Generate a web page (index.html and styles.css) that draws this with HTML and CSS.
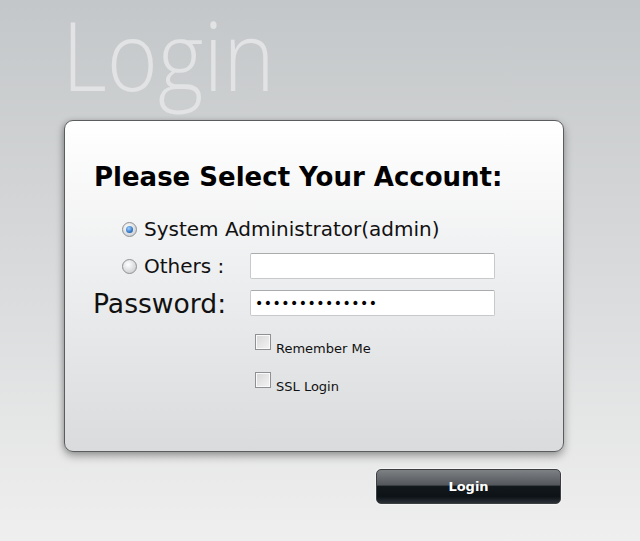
FILE: index.html
```html
<!DOCTYPE html>
<html>
<head>
<meta charset="UTF-8">
<title>Login</title>
<link rel="stylesheet" href="styles.css">
</head>
<body>
<div class="page">
	<h1 class="title">Login</h1>
	<form class="panel">
		<h2 class="heading">Please Select Your Account:</h2>
		<div class="row account">
			<span class="radio checked"></span>
			<span class="choice">System Administrator(admin)</span>
		</div>
		<div class="row">
			<div class="label others">
				<span class="radio"></span>
				<span class="choice">Others :</span>
			</div>
			<input type="text" class="field">
		</div>
		<div class="row pass-row">
			<div class="label pass">Password:</div>
			<input type="password" class="field secret" value="12345678901234">
		</div>
		<div class="row opt">
			<span class="check"></span>
			<span class="opt-text">Remember Me</span>
		</div>
		<div class="row opt">
			<span class="check"></span>
			<span class="opt-text">SSL Login</span>
		</div>
	</form>
	<div class="actions">
		<button type="button" class="btn">Login</button>
	</div>
</div>
</body>
</html>
```
FILE: styles.css
```css
html, body {
	margin : 0;
	height : 100%;
}
body {
	background : linear-gradient(#c4c7c9, #d6d8d9 45%, #efefef);
	font-family : "DejaVu Sans", Verdana, sans-serif;
}
.page {
	padding-left : 64px;
	padding-top : 1px;
	width : 500px;
}
.title {
	margin : -13px 0 0 -2px;
	height : 132px;
	font-family : "Open Sans", sans-serif;
	font-weight : 300;
	font-size : 96px;
	line-height : normal;
	color : #e1e3e4;
	transform : scaleX(0.91);
	transform-origin : left top;
}
.panel {
	box-sizing : border-box;
	width : 500px;
	height : 332px;
	margin : 0;
	padding : 41px 0 0 29px;
	border : 1px solid #5a5c5e;
	border-radius : 9px;
	background : linear-gradient(#ffffff, #eeeff0 45%, #d9dbdc);
	box-shadow : 0 4px 8px rgba(0, 0, 0, 0.35), -2px 0 4px rgba(0, 0, 0, 0.1);
}
.heading {
	margin : 0 0 22px 0;
	font-size : 26px;
	font-weight : bold;
	color : #000;
}
.row {
	display : flex;
	align-items : center;
}
.account {
	padding-left : 28px;
	height : 30px;
	margin-bottom : 9px;
}
.label {
	width : 156px;
	display : flex;
	align-items : center;
}
.others {
	padding-left : 28px;
	width : 128px;
	height : 26px;
}
.choice {
	font-size : 20px;
	color : #111;
	margin-left : 7px;
}
.radio {
	width : 13px;
	height : 13px;
	border-radius : 50%;
	border : 1px solid #8d9194;
	background : radial-gradient(circle at 40% 35%, #ffffff, #d3d5d7 70%);
	position : relative;
}
.radio.checked::after {
	content : "";
	position : absolute;
	left : 3px;
	top : 3px;
	width : 7px;
	height : 7px;
	border-radius : 50%;
	background : radial-gradient(circle at 40% 35%, #9ed0ff, #1d63b8 75%);
}
.field {
	box-sizing : border-box;
	width : 245px;
	height : 26px;
	margin : 0;
	padding : 0 4px;
	border : 1px solid #c7c9cb;
	border-top-color : #a9abad;
	border-radius : 2px;
	background : #fff;
	outline : none;
}
.pass-row {
	margin-top : 5px;
}
.pass {
	font-size : 26.6px;
	color : #111;
	height : 38px;
	margin-left : -1px;
	width : 157px;
}
.secret {
	font-size : 14px;
	letter-spacing : 0.5px;
	font-family : "DejaVu Sans", sans-serif;
	color : #000;
}
.opt {
	padding-left : 161px;
	margin-top : 11px;
	height : 26px;
}
.opt + .opt {
	margin-top : 12px;
}
.check {
	box-sizing : border-box;
	width : 16px;
	height : 16px;
	border : 1px solid #8e9092;
	background : linear-gradient(135deg, #d6d7d8, #f4f4f4);
	box-shadow : inset 0 0 0 1px #fafafa;
	align-self : flex-start;
	margin-top : 1px;
}
.opt-text {
	font-size : 13px;
	color : #111;
	margin-left : 5px;
	margin-top : 5px;
}
.actions {
	display : flex;
	justify-content : flex-end;
	padding-top : 17px;
	margin-right : 3px;
}
.btn {
	width : 185px;
	height : 35px;
	border : 1px solid #3c3f42;
	border-radius : 5px;
	background : linear-gradient(#7d8184, #54585c 45%, #12181c 50%, #0c1216 80%, #2a3035);
	color : #fff;
	font-family : "DejaVu Sans", Verdana, sans-serif;
	font-weight : bold;
	font-size : 13px;
	box-shadow : 0 0 0 1px #f4f4f4;
}
```
